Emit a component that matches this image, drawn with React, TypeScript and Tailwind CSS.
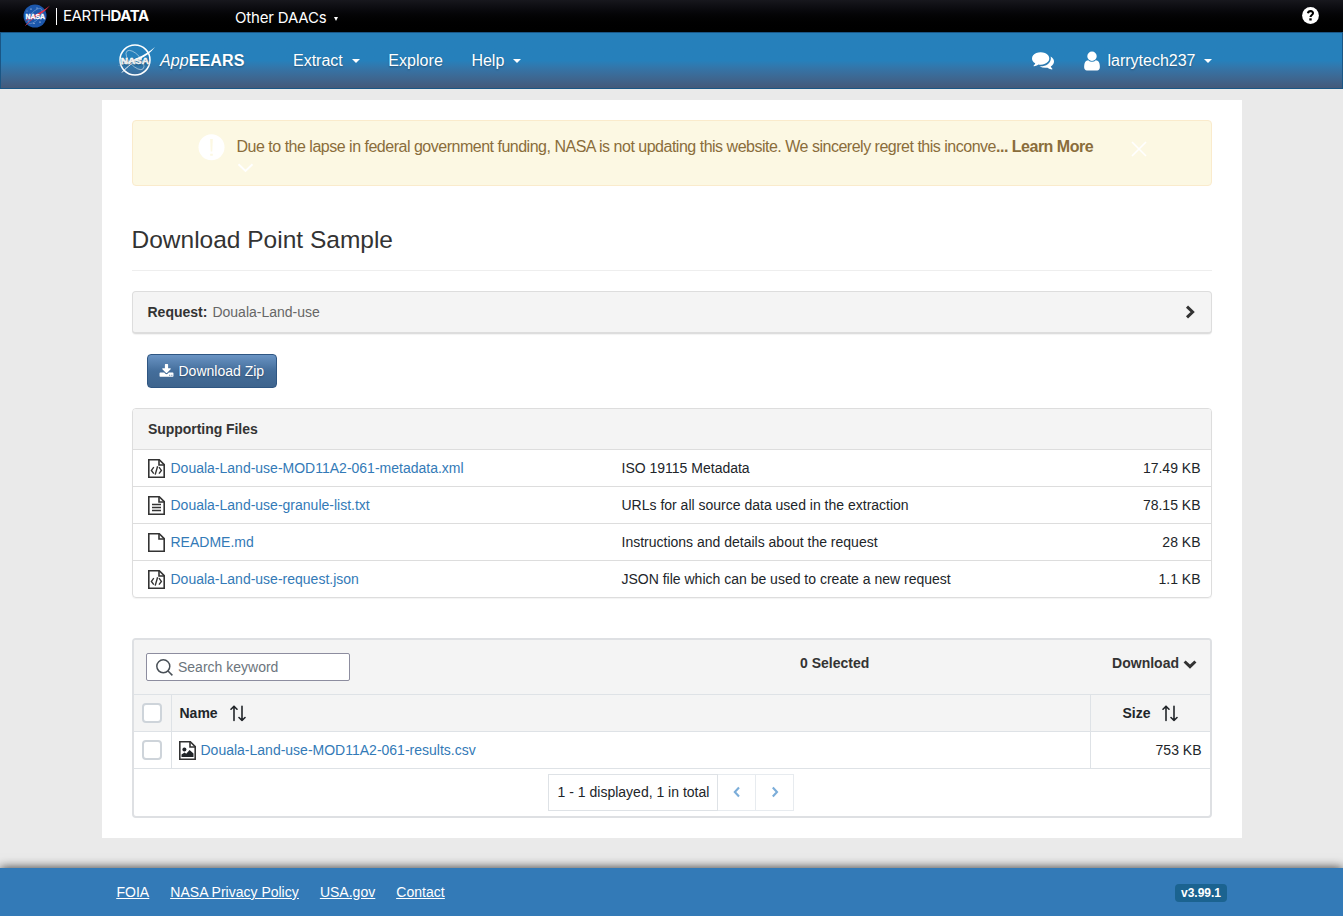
import React from "react";

const supportingFiles = [
  { icon: "code", name: "Douala-Land-use-MOD11A2-061-metadata.xml", info: "ISO 19115 Metadata", size: "17.49 KB" },
  { icon: "text", name: "Douala-Land-use-granule-list.txt", info: "URLs for all source data used in the extraction", size: "78.15 KB" },
  { icon: "blank", name: "README.md", info: "Instructions and details about the request", size: "28 KB" },
  { icon: "code", name: "Douala-Land-use-request.json", info: "JSON file which can be used to create a new request", size: "1.1 KB" },
];

function FileIcon({ kind }: { kind: string }) {
  return (
    <svg className="block h-[19px] w-[17px] shrink-0" viewBox="0 0 17 19" fill="none" stroke="#333" strokeWidth="1.6">
      <path d="M.8.8H11.3L16.2 5.7V18.2H.8Z" />
      <path d="M11 1V6H16" />
      {kind === "code" && (
        <path d="M5.8 8.2 3.4 11.4 5.8 14.6M11 8.2 13.4 11.4 11 14.6M9.6 7.2 7.2 15.6" strokeWidth="1.4" />
      )}
      {kind === "text" && <path d="M4 8.5H13M4 11.5H13M4 14.5H13" />}
      {kind === "image" && (
        <g fill="#212529" stroke="none">
          <circle cx="5.4" cy="8.5" r="2" />
          <path d="M2.5 16V13.5L5.6 11.6 7.2 12.8 10.6 9 14.5 12.5V16Z" />
        </g>
      )}
    </svg>
  );
}

function NasaColor() {
  return (
    <svg className="block h-[24px] w-[29px]" viewBox="0 0 29 24">
      <circle cx="13" cy="12" r="11.5" fill="#1c57ab" />
      <g fill="#fff">
        <circle cx="9" cy="5" r=".6" /><circle cx="15" cy="4" r=".5" /><circle cx="7" cy="17" r=".5" />
        <circle cx="18" cy="18" r=".6" /><circle cx="12" cy="19.5" r=".5" /><circle cx="5" cy="7" r=".4" />
      </g>
      <ellipse cx="13" cy="12" rx="9.5" ry="4.2" transform="rotate(-48 13 12)" fill="none" stroke="#9bbbe4" strokeWidth=".6" opacity=".7" />
      <path d="M28 1.5C22 9 16 12 2.5 17.2 11 11 18 9.5 28 1.5Z" fill="#e03149" />
      <path d="M3.5 21.5C8 16.5 12 13.5 18.5 10.5" fill="none" stroke="#e03149" strokeWidth=".8" />
      <text x="13.3" y="14.6" textAnchor="middle" fill="#fff" stroke="#fff" strokeWidth=".3" fontFamily="Liberation Sans, sans-serif" fontWeight="700" fontSize="6.6" textLength="19.5" lengthAdjust="spacingAndGlyphs">NASA</text>
    </svg>
  );
}

function NasaOutline() {
  return (
    <svg className="-mt-[2px] block h-[32px] w-[38px]" viewBox="0 0 38 32" fill="none" stroke="#fff">
      <circle cx="18" cy="16" r="15" strokeWidth="1.5" />
      <ellipse cx="18" cy="16" rx="12" ry="5.5" transform="rotate(48 18 16)" strokeWidth=".7" opacity=".65" />
      <path d="M38 3C29 14.5 19 17.5 1 21.5 16 15.5 26 13 38 3Z" fill="#fff" stroke="none" />
      <path d="M5 28.5C11 22 16 18 25 14" strokeWidth="1" />
      <text x="17.8" y="19.6" textAnchor="middle" fill="#fff" strokeWidth=".5" fontFamily="Liberation Sans, sans-serif" fontWeight="700" fontSize="9" textLength="28" lengthAdjust="spacingAndGlyphs">NASA</text>
    </svg>
  );
}

function Caret() {
  return <span className="block h-0 w-0 border-x-4 border-t-4 border-x-transparent border-t-white" />;
}

function SortIcon() {
  return (
    <svg className="mt-[1px] block h-[17px] w-[16px]" viewBox="0 0 16 17" fill="none" stroke="#212529" strokeWidth="1.6" strokeLinecap="round" strokeLinejoin="round">
      <path d="M4 15.5V1.2M1 4.2 4 1.2 7 4.2M12 1.2V15.5M9 12.5 12 15.5 15 12.5" />
    </svg>
  );
}

function Checkbox() {
  return <span className="block h-5 w-5 rounded-[4px] border-2 border-[#ced4da] bg-white" />;
}

export default function App() {
  return (
    <div className="flex h-[916px] w-full flex-col overflow-hidden bg-[#eaeaea] font-['Liberation_Sans',Arial,sans-serif] text-[14px] leading-5 text-[#212529]">
      <header className="flex h-8 shrink-0 items-center bg-linear-to-b from-[#17171d] to-black pl-[22px] pr-[24px] text-white">
        <div className="flex w-[213px] items-center">
          <NasaColor />
          <span className="ml-[5px] h-[17px] w-px bg-white" />
          <span className="ml-[6px] font-['Inter',sans-serif] text-[15px] tracking-[-0.45px]">
            EARTH<b>DATA</b>
          </span>
        </div>
        <span className="pt-[3px] font-['Inter',sans-serif] text-[15px] tracking-[-0.18px]">Other DAACs</span>
        <span className="ml-[8px] mt-[6px] block h-0 w-0 border-x-2 border-t-4 border-x-transparent border-t-white" />
        <svg className="mb-[1px] ml-auto h-[17px] w-[17px]" viewBox="0 0 17 17">
          <circle cx="8.5" cy="8.5" r="8.4" fill="#fff" />
          <path d="M5.9 6.3C6.5 3.2 11.2 3.5 11 6.3 10.9 8.1 8.5 8 8.5 10.1" fill="none" stroke="#000" strokeWidth="2.1" />
          <rect x="7.3" y="11.3" width="2.4" height="2.2" fill="#000" />
        </svg>
      </header>

      <nav className="flex h-[57px] shrink-0 items-center border border-[#1a5685] bg-linear-to-b from-[#2680bb] from-50% to-[#43597a] pl-[116px] pr-[130px] text-[16px] text-white [text-shadow:0_1px_2px_rgba(0,0,0,.3)]">
        <NasaOutline />
        <div className="ml-[5px] w-[132px] text-[16px] tracking-[0.1px]">
          <i>App</i>
          <b>EEARS</b>
        </div>
        <div className="flex items-center gap-[9px] pl-px">Extract <Caret /></div>
        <span className="ml-[28.5px] tracking-[0.05px]">Explore</span>
        <div className="ml-[28.5px] flex items-center gap-[9px]">Help <Caret /></div>
        <svg className="mb-[1px] ml-auto h-[22px] w-[22px]" viewBox="0 0 1792 1792" fill="#fff">
          <path d="M1408 768q0 139-94 257t-256.5 186.5-353.5 68.5q-86 0-176-16-124 88-278 128-36 9-86 16h-3q-11 0-20.5-8t-11.5-21q-1-3-1-6.5t.5-6.5 2-6l2.5-5 3.5-5.5 4-5 4.5-5 4-4.5q5-6 23-25t26-29.5 22.5-29 25-38.5 20.5-44q-124-72-195-177t-71-224q0-139 94-257t256.5-186.5 353.5-68.5 353.5 68.5 256.5 186.5 94 257zm384 256q0 120-71 224.5t-195 176.5q10 24 20.5 44t25 38.5 22.5 29 26 29.5 23 25q1 1 4 4.5t4.5 5 4 5 3.5 5.5l2.5 5 2 6 .5 6.5-1 6.5q-3 14-13 22t-22 7q-50-7-86-16-154-40-278-128-90 16-176 16-271 0-472-132 58 4 88 4 161 0 309-45t264-129q125-92 192-212t67-254q0-77-23-152 129 71 204 178t75 230z" />
        </svg>
        <svg className="ml-[29.5px] h-[22px] w-[16px]" viewBox="0 0 1280 1792" fill="#fff">
          <path d="M1280 1399q0 109-62.5 187t-150.5 78h-854q-88 0-150.5-78t-62.5-187q0-85 8.5-160.5t31.5-152 58.5-131 94-89 134.5-34.5q131 128 313 128t313-128q76 0 134.5 34.5t94 89 58.5 131 31.5 152 8.5 160.5zm-256-887q0 159-112.5 271.5t-271.5 112.5-271.5-112.5-112.5-271.5 112.5-271.5 271.5-112.5 271.5 112.5 112.5 271.5z" />
        </svg>
        <span className="ml-[7.5px] mr-[8.5px]">larrytech237</span>
        <Caret />
      </nav>

      <main className="ml-[102px] mt-[11px] flex h-[738px] w-[1140px] shrink-0 flex-col bg-white px-[30px] pt-5">
        <div className="flex h-[66px] shrink-0 items-start rounded-[4px] border border-[#faebcc] bg-[#fcf8e3] pl-[65px] pt-[13px] text-[#8a6d3b]">
          <svg className="h-[27px] w-[27px]" viewBox="0 0 27 27">
            <circle cx="13.5" cy="13.2" r="13" fill="#fff" />
            <path d="M12.2 5H14.8L14.3 17.5H12.7ZM12.2 19.7H14.8V21.7H12.2Z" fill="#fcf8e3" />
          </svg>
          <div className="ml-[11.5px] w-[857.5px] pt-[3px]">
            <p className="whitespace-nowrap text-[16px] tracking-[-0.493px]">
              Due to the lapse in federal government funding, NASA is not updating this website. We sincerely regret this inconve<b>... Learn More</b>
            </p>
            <svg className="mt-[6px] h-[10px] w-[17px]" viewBox="0 0 17 10" fill="none" stroke="#fff" strokeWidth="1.9">
              <path d="M1.5 1.2 8.5 8 15.5 1.2" />
            </svg>
          </div>
          <svg className="ml-[37px] mt-[7px] h-[16px] w-[16px]" viewBox="0 0 16 16" stroke="#fff" strokeWidth="1.6">
            <path d="M1 1 15 15M15 1 1 15" />
          </svg>
        </div>

        <h1 className="mt-[35px] h-[50px] shrink-0 border-b border-[#eee] text-[24.5px] leading-[38px] text-[#333]">
          <span className="-ml-[0.5px]">Download Point Sample</span>
        </h1>

        <section className="mt-5 flex h-[43px] shrink-0 items-center rounded-[4px] border border-b-2 border-[#ddd] bg-[#f4f4f4] pl-[14.5px] pr-[15px] shadow-[0_1px_1px_rgba(0,0,0,.05)]">
          <b className="text-[#333]">Request:</b>
          <span className="ml-[5px] text-[#666]">Douala-Land-use</span>
          <svg className="mb-[1px] ml-auto h-[14px] w-[11px]" viewBox="0 0 11 14" fill="none" stroke="#333" strokeWidth="3">
            <path d="M2 1.7 7.6 7 2 12.3" />
          </svg>
        </section>

        <button className="ml-[15px] mt-5 flex h-[34px] w-[130px] shrink-0 items-center rounded-[4px] border border-[#2f5682] bg-linear-to-b from-[#6a94c4] via-[#446e9b] via-50% to-[#3e648d] pl-[10.5px] text-white [text-shadow:0_1px_2px_rgba(0,0,0,.3)]">
          <svg className="mr-[5px] h-[15px] w-[15px]" viewBox="0 0 1792 1792" fill="#fff">
            <path d="M1344 1344q0-26-19-45t-45-19-45 19-19 45 19 45 45 19 45-19 19-45zm256 0q0-26-19-45t-45-19-45 19-19 45 19 45 45 19 45-19 19-45zm128-224v320q0 40-28 68t-68 28h-1472q-40 0-68-28t-28-68v-320q0-40 28-68t68-28h465l135 136q58 56 136 56t136-56l136-136h464q40 0 68 28t28 68zm-325-569q17 41-14 70l-448 448q-18 19-45 19t-45-19l-448-448q-31-29-14-70 17-39 59-39h256v-448q0-26 19-45t45-19h256q26 0 45 19t19 45v448h256q42 0 59 39z" />
          </svg>
          Download Zip
        </button>

        <section className="mt-5 flex h-[190px] shrink-0 flex-col overflow-hidden rounded-[4px] border border-[#ddd] shadow-[0_1px_1px_rgba(0,0,0,.05)]">
          <h2 className="flex h-10 shrink-0 items-center bg-[#f4f4f4] pl-[15px] font-bold tracking-[-0.05px] text-[#333]">Supporting Files</h2>
          {supportingFiles.map((f) => (
            <div key={f.name} className="flex h-[37px] shrink-0 items-center border-t border-[#ddd] pl-[15px] pr-[10.5px]">
              <FileIcon kind={f.icon} />
              <span className="ml-[5.5px] w-[451px] text-[#337ab7]">{f.name}</span>
              <span>{f.info}</span>
              <span className="ml-auto">{f.size}</span>
            </div>
          ))}
        </section>

        <section className="mt-10 flex h-[180px] shrink-0 flex-col overflow-hidden rounded-[4px] border-2 border-[#dee0e3]">
          <div className="flex h-[54px] shrink-0 items-start bg-[#f4f4f4] pl-3 pr-[13px] pt-[13px]">
            <div className="flex h-[28px] w-[204px] items-center rounded-[2px] border border-[#8d8d9f] bg-white pl-[9px]">
              <svg className="h-[17px] w-[17px]" viewBox="0 0 17 17" fill="none" stroke="#495057" strokeWidth="1.5">
                <circle cx="7.3" cy="7.3" r="6.5" />
                <path d="m12 12 4.4 4.4" />
              </svg>
              <span className="ml-[5px] text-[#6c757d]">Search keyword</span>
            </div>
            <b className="ml-[450px] text-[#333]">0 Selected</b>
            <b className="ml-auto text-[#333]">Download</b>
            <svg className="ml-[4px] mt-[6.5px] h-[9px] w-[14px]" viewBox="0 0 14 9" fill="none" stroke="#333" strokeWidth="3">
              <path d="M1.6 1.5 7 6.7 12.4 1.5" />
            </svg>
          </div>
          <div className="flex h-[37px] shrink-0 border-t border-[#dee2e6] bg-[#f4f4f4]">
            <div className="flex w-[38px] items-center border-r border-[#dee2e6] pl-[8px]"><Checkbox /></div>
            <div className="flex w-[919px] items-center border-r border-[#dee2e6] pl-[7.5px]">
              <b className="mr-[12.5px]">Name</b><SortIcon />
            </div>
            <div className="flex items-center pl-[31.5px]"><b className="mr-[11.5px]">Size</b><SortIcon /></div>
          </div>
          <div className="flex h-[37px] shrink-0 border-t border-[#dee2e6]">
            <div className="flex w-[38px] items-center border-r border-[#dee2e6] pl-[8px]"><Checkbox /></div>
            <div className="flex w-[919px] items-center border-r border-[#dee2e6] pl-[7px]">
              <FileIcon kind="image" />
              <span className="ml-[4.5px] text-[#337ab7]">Douala-Land-use-MOD11A2-061-results.csv</span>
            </div>
            <div className="flex flex-1 items-center justify-end pr-[8.5px]">753 KB</div>
          </div>
          <div className="flex flex-1 border-t border-[#dee2e6] pl-[414px] pt-[5px]">
            <span className="flex h-[37px] w-[170px] items-center justify-center border border-[#dee2e6] pb-[2px] pl-px">1 - 1 displayed, 1 in total</span>
            {["M6 1.5 1.8 6 6 10.5", "M1.8 1.5 6 6 1.8 10.5"].map((d) => (
              <span key={d} className="flex h-[37px] w-[38px] items-center justify-center border border-l-0 border-[#e7ebef]">
                <svg className="mb-[1px] h-[12px] w-[8px]" viewBox="0 0 8 12" fill="none" stroke="#7badd9" strokeWidth="2.1"><path d={d} /></svg>
              </span>
            ))}
          </div>
        </section>
      </main>

      <footer className="mt-[30px] flex h-12 shrink-0 items-center bg-[#337ab7] pl-[116.5px] pr-[116px] text-white shadow-[0_0_10px_rgba(0,0,0,.8)]">
        <div className="flex gap-[21.2px] underline">
          <a>FOIA</a><a>NASA Privacy Policy</a><a>USA.gov</a><a>Contact</a>
        </div>
        <span className="ml-auto mt-[2px] flex h-[18px] w-[52px] items-center justify-center rounded-[4px] bg-[#1b6390] text-[12px] font-bold">v3.99.1</span>
      </footer>
    </div>
  );
}
